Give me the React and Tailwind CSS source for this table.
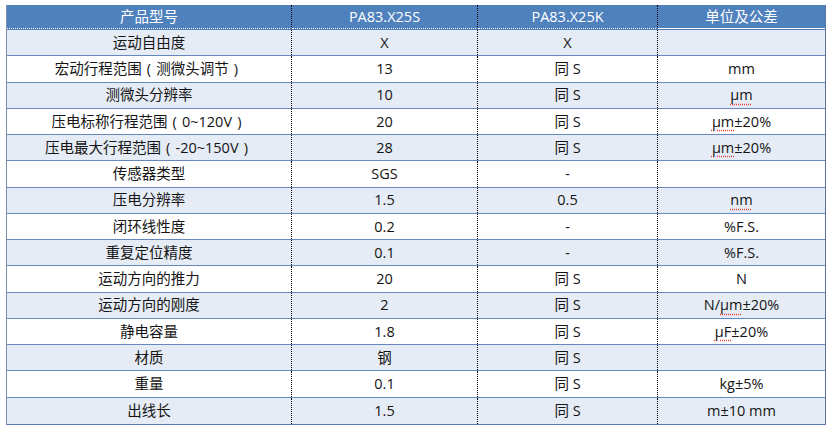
const P = ({ c }) => <span className="inline-block w-[1em] text-center">{c}</span>;

const rows = [
  ["运动自由度", "X", "X", ""],
  [<>宏动行程范围<P c="(" />测微头调节<P c=")" /></>, "13", "同 S", "mm"],
  ["测微头分辨率", "10", "同 S", [["µm", true]]],
  [<>压电标称行程范围<P c="(" />0~120V<P c=")" /></>, "20", "同 S", [["µm", true], ["±20%", false]]],
  [<>压电最大行程范围<P c="(" />-20~150V<P c=")" /></>, "28", "同 S", [["µm", true], ["±20%", false]]],
  ["传感器类型", "SGS", "-", ""],
  ["压电分辨率", "1.5", "0.5", [["nm", true]]],
  ["闭环线性度", "0.2", "-", "%F.S."],
  ["重复定位精度", "0.1", "-", "%F.S."],
  ["运动方向的推力", "20", "同 S", "N"],
  ["运动方向的刚度", "2", "同 S", [["N/", false], ["µm", true], ["±20%", false]]],
  ["静电容量", "1.8", "同 S", [["µF", true], ["±20%", false]]],
  ["材质", "钢", "同 S", ""],
  ["重量", "0.1", "同 S", "kg±5%"],
  ["出线长", "1.5", "同 S", "m±10 mm"],
];

const Unit = ({ value }) => {
  if (typeof value === "string") return value;
  return value.map(([t, mark], i) =>
    mark ? (
      <span key={i} className="underline decoration-dotted decoration-[#e0403a] underline-offset-[3px]">
        {t}
      </span>
    ) : (
      <span key={i}>{t}</span>
    )
  );
};

const cell = "flex items-center justify-center border-r border-dotted border-black";
const head = "flex items-center justify-center bg-[#4f81bd] text-white border-b border-b-white";

export default function App() {
  return (
    <div
      className="w-[831px] h-[431px] bg-white pt-[5px] pl-[6px] text-[14.5px] text-[#141414]"
      style={{ fontFamily: '"Open Sans", "Noto Sans CJK SC", sans-serif' }}
    >
      <div className="w-[820px] border-l border-r border-b border-l-[#7a8fae] border-r-[#5a73a0] border-b-[#5a78ad]">
        <div className="grid grid-cols-[285px_186px_180px_167px] h-[25px] border-b border-[#4f78b5]">
          <div className={`${head} border-r border-dotted border-r-black`}>产品型号</div>
          <div className={`${head} border-r border-dotted border-r-black`}>PA83.X25S</div>
          <div className={`${head} border-r border-dotted border-r-black`}>PA83.X25K</div>
          <div className={head}>单位及公差</div>
        </div>
        {rows.map((r, i) => (
          <div
            key={i}
            className={`grid grid-cols-[285px_186px_180px_167px] h-[26.27px] ${
              i < rows.length - 1 ? "border-b border-[#6688bf]" : ""
            } ${i % 2 === 0 ? "bg-[#e6ecf5]" : "bg-white"}`}
          >
            <div className={cell}>{r[0]}</div>
            <div className={cell}>{r[1]}</div>
            <div className={cell}>{r[2]}</div>
            <div className="flex items-center justify-center">
              <Unit value={r[3]} />
            </div>
          </div>
        ))}
      </div>
    </div>
  );
}
